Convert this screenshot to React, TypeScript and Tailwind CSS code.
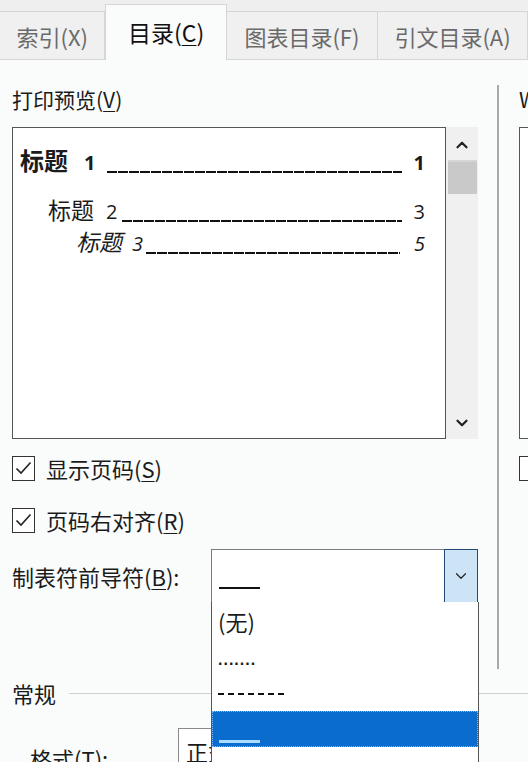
import { ChevronDown, ChevronUp } from "lucide-react";

const font = "font-['Microsoft_YaHei','Noto_Sans_CJK_SC',sans-serif]";

function Check() {
  return (
    <div className="flex h-[25px] w-[23px] shrink-0 items-center justify-center border-[1.5px] border-[#333] bg-white">
      <svg width="17" height="14" viewBox="0 0 17 14" fill="none">
        <path d="M1.5 7.5 L6 12 L15.5 1.5" stroke="#222" strokeWidth="1.6" />
      </svg>
    </div>
  );
}

function Ak({ k }: { k: string }) {
  return (
    <>
      (<span className="underline decoration-1 underline-offset-[3px]">{k}</span>)
    </>
  );
}

const leaders = ["(无)", "dots", "dashes", "line", "heavy"];

export default function App() {
  return (
    <div
      className={`relative h-[762px] w-[528px] overflow-hidden bg-[#fafbfb] text-[#1b1b1b] ${font}`}
    >
      {/* tabs */}
      <div className="flex h-[60px] items-end border-b border-[#d6d6d6] bg-[#efefef] text-[22px] leading-none">
        <div className="flex h-[49px] w-[106px] -mb-px items-center justify-center border border-l-0 border-[#d6d6d6] bg-[#f0f0f0] text-[#6a6a6a]">
          索引(X)
        </div>
        <div className="relative z-10 flex h-[56px] w-[122px] -mb-px items-center justify-center border border-b-0 border-[#d6d6d6] bg-[#fafbfb] text-[23px] text-[#111]">
          目录<Ak k="C" />
        </div>
        <div className="flex h-[49px] w-[152px] -mb-px items-center justify-center border border-l-0 border-[#d6d6d6] bg-[#f0f0f0] text-[#6a6a6a]">
          图表目录(F)
        </div>
        <div className="flex h-[49px] w-[150px] -mb-px shrink-0 items-center justify-center border border-l-0 border-[#d6d6d6] bg-[#f0f0f0] text-[#6a6a6a]">
          引文目录(A)
        </div>
      </div>

      {/* two columns */}
      <div className="flex h-[610px]">
        <div className="w-[497px] shrink-0 pl-[12px]">
          <div className="mt-[25px] h-[28px] text-[21px] leading-[28px]">
            打印预览<Ak k="V" />
          </div>

          <div className="mt-[14px] flex h-[312px] w-[466px]">
            <div className="w-[434px] border border-[#555] bg-white pl-[7px] pr-[20px]">
              <div className="mt-[14px] flex h-[30px] items-baseline font-bold">
                <span className="text-[24px]">标题</span>
                <span className="ml-[16px] font-['Open_Sans',sans-serif] text-[20px]">1</span>
                <div className="ml-[12px] h-[2px] flex-1 translate-y-[3px] bg-[repeating-linear-gradient(90deg,#111_0_10px,transparent_10px_11px)]" />
                <span className="ml-[12px] font-['Open_Sans',sans-serif] text-[20px]">1</span>
              </div>
              <div className="mt-[20px] flex h-[30px] items-baseline pl-[28px]">
                <span className="text-[23px]">标题</span>
                <span className="ml-[12px] font-['Open_Sans',sans-serif] text-[20px]">2</span>
                <div className="ml-[5px] h-[2px] flex-1 translate-y-[3px] bg-[repeating-linear-gradient(90deg,#111_0_10px,transparent_10px_11px)]" />
                <span className="ml-[12px] font-['Open_Sans',sans-serif] text-[20px]">3</span>
              </div>
              <div className="mt-[2px] flex h-[30px] items-baseline pl-[56px] italic">
                <span className="text-[23px]">标题</span>
                <span className="ml-[10px] font-['Open_Sans',sans-serif] text-[20px]">3</span>
                <div className="ml-[3px] mr-[2px] h-[2px] flex-1 translate-y-[3px] bg-[repeating-linear-gradient(90deg,#111_0_10px,transparent_10px_11px)]" />
                <span className="ml-[12px] font-['Open_Sans',sans-serif] text-[20px]">5</span>
              </div>
            </div>
            <div className="flex w-[32px] flex-col items-center bg-[#f0f0f0]">
              <ChevronUp className="mt-[9px] h-[18px] w-[18px] text-[#222]" strokeWidth={3} />
              <div className="mt-[6px] h-[34px] w-[29px] border-t-2 border-[#d6d6d6] bg-[#c9c9c9]" />
              <div className="flex-1" />
              <ChevronDown className="mb-[7px] h-[18px] w-[18px] text-[#222]" strokeWidth={3} />
            </div>
          </div>

          <div className="mt-[16px] flex h-[26px] items-center gap-[11px] text-[22px]">
            <Check />
            <span>
              显示页码<Ak k="S" />
            </span>
          </div>
          <div className="mt-[26px] flex h-[26px] items-center gap-[11px] text-[22px]">
            <Check />
            <span>
              页码右对齐<Ak k="R" />
            </span>
          </div>

          <div className="mt-[16px] flex h-[54px] items-center">
            <span className="w-[199px] text-[22px]">
              制表符前导符<Ak k="B" />:
            </span>
            <div className="relative z-20 flex h-[54px] w-[267px] border border-[#7a7a7a] bg-white">
              <div className="flex flex-1 items-end pb-[13px] pl-[7px]">
                <div className="h-[2px] w-[41px] bg-[#111]" />
              </div>
              <div className="-my-px -mr-px flex w-[34px] items-center justify-center border-[1.5px] border-[#234a72] bg-[#cde4f7]">
                <ChevronDown className="h-[18px] w-[18px] text-[#222]" strokeWidth={1.6} />
              </div>

              {/* open list */}
              <div className="absolute left-[-1px] top-full w-[268px] border-x border-[#555] bg-white pt-[1px]">
                {leaders.map((l) => {
                  const sel = l === "line";
                  return (
                    <div
                      key={l}
                      className={[
                        "flex h-[36px] items-center pl-[6px] text-[22px]",
                        sel ? "border border-dotted border-[#8ab9ea] bg-[#0a6ccf]" : "",
                      ].join(" ")}
                    >
                      {l === "(无)" && <span>(无)</span>}
                      {l === "dots" && (
                        <span className="mt-[6px] tracking-[1px] font-['Liberation_Sans',sans-serif] text-[16px] font-bold">
                          .......
                        </span>
                      )}
                      {l === "dashes" && (
                        <div className="mt-[2px] h-[2px] w-[66px] border-t-[2px] border-dashed border-[#111]" />
                      )}
                      {sel && <div className="mt-[24px] h-[3px] w-[41px] bg-[#a9dcff]" />}
                    </div>
                  );
                })}
              </div>
            </div>
          </div>
        </div>

        <div className="mt-[25px] h-[584px] w-[2px] shrink-0 bg-[#a9a9a9]" />

        <div className="flex-1 pl-[20px]">
          <div className="mt-[25px] h-[28px] whitespace-nowrap text-[21px] leading-[28px]">Web 预览(W)</div>
          <div className="mt-[14px] h-[312px] w-[400px] border border-[#555] bg-white" />
          <div className="mt-[16px] flex h-[26px] items-center">
            <div className="h-[25px] w-[23px] border-[1.5px] border-[#333] bg-white" />
          </div>
        </div>
      </div>

      {/* general group */}
      <div className="pl-[12px]">
        <div className="mt-[10px] flex h-[26px] items-center">
          <span className="text-[22px]">常规</span>
          <div className="ml-[13px] h-px flex-1 bg-[#d0d0d0]" />
        </div>
        <div className="mt-[22px] flex h-[40px] items-start pl-[18px]">
          <span className="mt-[14px] w-[148px] text-[22px]">
            格式<Ak k="T" />:
          </span>
          <div className="h-[40px] w-[300px] border border-[#8a8a8a] bg-white pl-[7px] pt-[6px] text-[22px]">
            正式
          </div>
        </div>
      </div>
    </div>
  );
}
